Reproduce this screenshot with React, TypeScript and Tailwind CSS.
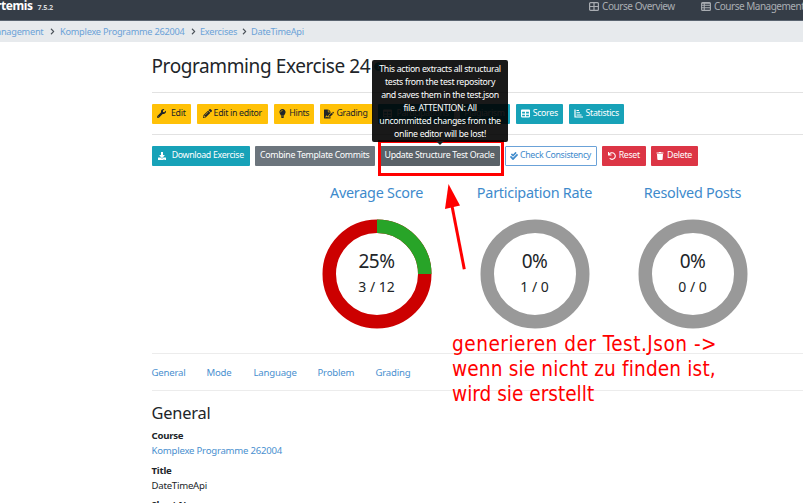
import React from 'react';
import {
  FaWrench, FaPencilAlt, FaLightbulb, FaFileSignature, FaTable, FaDownload,
  FaCheckDouble, FaUndo, FaTrash, FaInfoCircle, FaChevronRight,
} from 'react-icons/fa';

const btn = 'flex h-5 shrink-0 items-center justify-center gap-1 overflow-hidden whitespace-nowrap rounded-[1px] text-[8.8px] tracking-[-0.32px]';
const yellow = btn + ' bg-[#ffc107] text-[#212529]';
const teal = btn + ' bg-[#17a2b8] text-white';
const gray = btn + ' bg-[#6c757d] text-white';
const red = btn + ' bg-[#dc3545] text-white';

function ChartBars() {
  return (
    <svg className="-mr-px size-[9px]" viewBox="0 0 18 18" fill="none" stroke="currentColor" strokeWidth="2.4">
      <path d="M2 1v15H18M5 3h5M5 7.5h7M5 12h10" />
    </svg>
  );
}

function GridIcon() {
  return (
    <svg className="h-[9px] w-[10px]" viewBox="0 0 20 18" fill="none" stroke="currentColor" strokeWidth="2.4">
      <rect x="1.2" y="1.2" width="17.6" height="15.6" rx="2" />
      <path d="M10 1v16M1 9h18" />
    </svg>
  );
}

function ListIcon() {
  return (
    <svg className="h-[9px] w-[10px]" viewBox="0 0 20 18" fill="none" stroke="currentColor" strokeWidth="2.2">
      <rect x="1.2" y="1.2" width="17.6" height="15.6" rx="2" />
      <path d="M6.5 1v16M1 6.5h18M1 11.5h18M1 2.5h18" />
    </svg>
  );
}

function Donut({ title, percent, detail, share }: { title: string; percent: string; detail: string; share: number | null }) {
  return (
    <div className="flex w-[158px] flex-col items-center">
      <div className="h-5 whitespace-nowrap text-[14.4px] leading-5 tracking-[-0.25px] text-[#3e8acc]">{title}</div>
      <div className="relative mt-4 size-[110px]">
        <svg className="size-[110px]" viewBox="0 0 110 110" fill="none" strokeWidth="13.5">
          <circle cx="55" cy="55" r="47.75" stroke={share === null ? '#999999' : '#cc0000'} />
          {share !== null && (
            <circle cx="55" cy="55" r="47.75" stroke="#28a428" pathLength="100" strokeDasharray={share + ' 100'} transform="rotate(-90 55 55)" />
          )}
        </svg>
        <div className="absolute inset-0 flex flex-col items-center pt-[29px] text-[#212529]">
          <div className="text-[19px] leading-[26px] tracking-[-0.5px]">{percent}</div>
          <div className="text-[14px] leading-[26px]">{detail}</div>
        </div>
      </div>
    </div>
  );
}

export default function App() {
  return (
    <div className="relative h-[503px] w-[803px] overflow-hidden bg-white font-['Noto_Sans','Open_Sans',sans-serif] text-[#212529]">
      <header className="flex h-[21px] border-b border-[#5a6470] bg-[#353d47] text-[10px] leading-3 text-[#a9adb2]">
        <div className="-ml-[4px] flex w-[593px] shrink-0 whitespace-nowrap">
          <span className="w-[41.5px] text-[12px] font-bold tracking-[-0.4px] text-white">rtemis</span>
          <span className="pt-px text-[7.2px] font-bold tracking-[-0.2px] text-[#d5d7da]">7.5.2</span>
        </div>
        <div className="flex h-3 w-[112px] shrink-0 items-center gap-[3px] whitespace-nowrap"><GridIcon /><span className="tracking-[-0.44px]">Course Overview</span></div>
        <div className="flex h-3 shrink-0 items-center gap-[3px] whitespace-nowrap"><ListIcon /><span className="tracking-[-0.5px]">Course Management</span></div>
      </header>
      <nav className="flex h-[21px] items-center whitespace-nowrap bg-[#e7eaed] text-[9.2px] tracking-[-0.24px] text-[#6ba2d8]">
        <span className="-ml-[4px] w-[53px]">anagement</span>
        <FaChevronRight className="mr-[4px] size-[7px] text-[#495057]" />
        <span className="w-[130px]">Komplexe Programme 262004</span>
        <FaChevronRight className="mr-[3px] size-[7px] text-[#495057]" />
        <span className="w-[41px]">Exercises</span>
        <FaChevronRight className="mr-[3px] size-[7px] text-[#495057]" />
        <span>DateTimeApi</span>
      </nav>

      <main className="ml-[151.5px]">
        <div className="flex h-[51px] items-center border-b border-[#e2e2e2] pb-px">
          <h1 className="w-[222px] whitespace-nowrap text-[19px] tracking-[-0.4px]">Programming Exercise 24</h1>
          <FaInfoCircle className="size-[9px] text-[#17a2b8]" />
        </div>
        <div className="flex h-[42px] items-center gap-[5.5px] border-b border-[#e2e2e2]">
          <button className={yellow + ' w-[39.5px]'}><FaWrench className="mr-px size-[9px]" />Edit</button>
          <button className={yellow + ' w-[71.5px]'}><FaPencilAlt className="-mr-[2px] size-[9px]" />Edit in editor</button>
          <button className={yellow + ' w-[40.5px]'}><FaLightbulb className="-mr-[2px] size-[9px]" />Hints</button>
          <button className={yellow + ' w-[53px]'}><FaFileSignature className="-mr-[2px] size-[10px]" />Grading</button>
          <button className={teal + ' w-[76px]'}><FaTable className="size-[9px]" />Participations</button>
          <button className={teal + ' w-[50px]'}>Plagiarism</button>
          <button className={teal + ' ml-[0.5px] w-[47.5px]'}><FaTable className="-mr-px size-[9px]" />Scores</button>
          <button className={teal + ' w-[55.5px]'}><ChartBars />Statistics</button>
        </div>
        <div className="flex h-[42px] items-center gap-[5px]">
          <button className={teal + ' w-[98.5px]'}><FaDownload className="mr-0.5 size-[8px]" />Download Exercise</button>
          <button className={gray + ' w-[119.5px]'}>Combine Template Commits</button>
          <button className={btn + ' w-[120px] bg-[#5a6268] text-white'}>Update Structure Test Oracle</button>
          <button className={btn + ' w-[92px] border border-[#6ba2d8] bg-white text-[#3e8acc]'}><FaCheckDouble className="-mr-0.5 size-[8px]" />Check Consistency</button>
          <button className={red + ' ml-[0.5px] w-[43.5px]'}><FaUndo className="-mr-px size-[8px]" />Reset</button>
          <button className={red + ' w-[47px]'}><FaTrash className="-mr-px size-[8px]" />Delete</button>
        </div>
        <div className="ml-[146px] flex h-[176px] pt-[6px]">
          <Donut title="Average Score" percent="25%" detail="3 / 12" share={25} />
          <Donut title="Participation Rate" percent="0%" detail="1 / 0" share={null} />
          <Donut title="Resolved Posts" percent="0%" detail="0 / 0" share={null} />
        </div>
        <div className="flex h-[38px] items-center whitespace-nowrap border-y border-[#ececec] pt-[2px] text-[9.6px] tracking-[-0.2px] text-[#4a90cf]">
          <a className="w-[55px]">General</a>
          <a className="w-[47px]">Mode</a>
          <a className="w-[64px]">Language</a>
          <a className="w-[58px]">Problem</a>
          <a>Grading</a>
        </div>
        <h2 className="mt-[10px] h-[24px] text-[16.4px] leading-6 tracking-[-0.2px]">General</h2>
        <dl className="mt-[3px] text-[9.6px] leading-[15px] tracking-[-0.23px]">
          <dt className="font-bold">Course</dt>
          <dd className="mb-[5px] text-[#4a90cf]">Komplexe Programme 262004</dd>
          <dt className="font-bold">Title</dt>
          <dd className="mb-[4px]">DateTimeApi</dd>
          <dt className="font-bold">Short Name</dt>
        </dl>
      </main>

      <div className="absolute left-[378px] top-[140px] h-[36px] w-[126px] border-[3px] border-[#ff0000]" />
      <div className="absolute left-[372px] top-[60px] h-[82px] w-[136px] rounded-[2px] bg-black/90 pt-[3px] text-center text-[8.8px] leading-[12.9px] tracking-[-0.34px] text-white">
        <div className="whitespace-nowrap">This action extracts all structural</div>
        <div className="whitespace-nowrap">tests from the test repository</div>
        <div className="whitespace-nowrap">and saves them in the test.json</div>
        <div className="whitespace-nowrap">file. ATTENTION: All</div>
        <div className="whitespace-nowrap">uncommitted changes from the</div>
        <div className="whitespace-nowrap">online editor will be lost!</div>
        <svg className="absolute left-[64px] top-[81px] h-1 w-2" viewBox="0 0 8 4"><path d="M0 0h8L4 4z" fill="#1a1a1a" /></svg>
      </div>
      <svg className="absolute left-[440px] top-[180px] h-[92px] w-[30px]" viewBox="0 0 30 92" fill="#ff0000">
        <path d="M8.5 4L20 25.5L5 29z" />
        <path d="M12 26L24.3 89.3" stroke="#ff0000" strokeWidth="3" />
      </svg>
      <div className="absolute left-[452px] top-[332px] whitespace-nowrap font-['DejaVu_Sans_Condensed','DejaVu_Sans',sans-serif] text-[20.6px] leading-[25px] text-[#ff0000]">
        <div className="tracking-[0.5px]">generieren der Test.Json -&gt;</div>
        <div className="tracking-[0.15px]">wenn sie nicht zu finden ist,</div>
        <div>wird sie erstellt</div>
      </div>
    </div>
  );
}
